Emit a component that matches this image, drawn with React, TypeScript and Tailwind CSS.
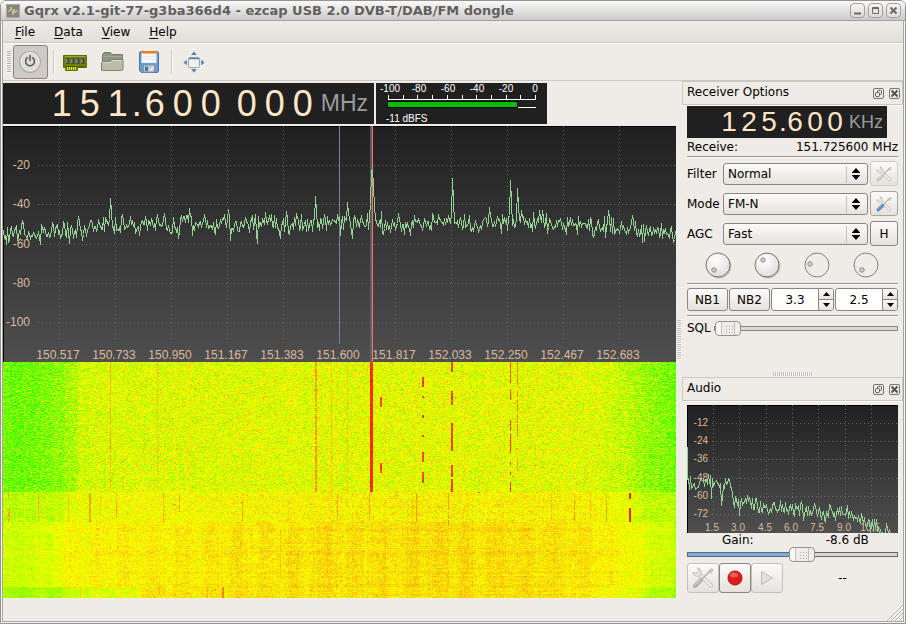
import React, { useLayoutEffect, useRef, useState } from 'react';

const SANS = "font-['DejaVu_Sans',sans-serif]";

function makeRandom(seed: number) {
  let s = seed;
  return () => {
    s = (s + 0x6d2b79f5) | 0;
    let t = Math.imul(s ^ (s >>> 15), 1 | s);
    t = (t + Math.imul(t ^ (t >>> 7), 61 | t)) ^ t;
    return ((t ^ (t >>> 14)) >>> 0) / 4294967296;
  };
}

function interpolate(points: number[][], x: number) {
  if (x <= points[0][0]) return points[0][1];
  for (let i = 1; i < points.length; i++) {
    if (x <= points[i][0]) {
      const [x0, y0] = points[i - 1];
      const [x1, y1] = points[i];
      return y0 + ((y1 - y0) * (x - x0)) / (x1 - x0);
    }
  }
  return points[points.length - 1][1];
}

/* ---------- RF spectrum ---------- */

const FLOOR = [[0, 110], [30, 109], [60, 105], [85, 102], [110, 99], [150, 98], [400, 97], [540, 96], [600, 100], [640, 105], [673, 110]];
const PEAKS = [
  [19, 95], [107, 72], [154, 89], [161, 87], [75, 90], [186, 82], [225, 83], [283, 85], [312, 70], [344, 76],
  [449, 52], [486, 81], [507, 54], [514, 62], [536, 84], [539, 84], [605, 84], [629, 89], [321, 88], [334, 88],
  [88, 94], [142, 90], [178, 90], [395, 87], [435, 88], [518, 84], [242, 91], [266, 90],
];
const DIPS = [[37, 118], [66, 117], [254, 117], [227, 114], [349, 112], [175, 112], [277, 112], [380, 108], [590, 111], [574, 108]];

function spectrumPath() {
  const rnd = makeRandom(77);
  const ys: number[] = [];
  for (let x = 0; x < 673; x++) {
    ys.push(interpolate(FLOOR, x) + (rnd() + rnd() - 1) * 12);
  }
  for (const [x, y] of PEAKS) {
    ys[x] = y;
    ys[x + 1] = Math.min(ys[x + 1], y + (100 - y) * 0.45);
    ys[x - 1] = Math.min(ys[x - 1], y + (100 - y) * 0.75);
  }
  for (const [x, y] of DIPS) ys[x] = y;
  [[366, 90], [367, 78], [368, 44], [369, 43], [370, 60], [371, 80], [372, 92]].forEach(([x, y]) => (ys[x] = y));
  return ys.map((y, x) => `${x ? 'L' : 'M'}${x + 0.5} ${Math.round(y) + 0.5}`).join('');
}

const SPECTRUM = spectrumPath();
const FREQS = ['150.517', '150.733', '150.950', '151.167', '151.383', '151.600', '151.817', '152.033', '152.250', '152.467', '152.683'];
const LEVELS = [['-20', 39], ['-40', 78], ['-60', 118], ['-80', 157], ['-100', 196]] as const;

function Spectrum() {
  return (
    <svg className="block h-[236px] w-full font-['Liberation_Sans',sans-serif] text-[12px]" viewBox="0 0 673 236" preserveAspectRatio="xMidYMid slice" role="img" aria-label="RF spectrum">
      <defs>
        <linearGradient id="plot" x1="0" y1="0" x2="0" y2="1">
          <stop offset="0" stopColor="#202020" />
          <stop offset="1" stopColor="#4f4f4f" />
        </linearGradient>
      </defs>
      <rect width="673" height="236" fill="url(#plot)" />
      <path d="M0 .5H673M.5 0V236" stroke="#000" />
      <g stroke="#666" strokeDasharray="1 3" shapeRendering="crispEdges">
        {FREQS.map((f, i) => i !== 5 && <path key={f} d={`M${56.5 + i * 56} 0V218`} />)}
        {LEVELS.map(([l, y]) => <path key={l} d={`M35 ${y + 0.5}H673`} />)}
      </g>
      <g fill="#d8ba9f">
        {LEVELS.map(([l, y]) => <text key={l} x="27" y={y + 4} textAnchor="end">{l}</text>)}
        {FREQS.map((f, i) => <text key={f} x={55 + i * 56} y="233" textAnchor="middle">{f}</text>)}
      </g>
      <path d="M336.5 0V218" stroke="#788290" />
      <rect x="367" width="3" height="236" fill="#666" fillOpacity=".8" />
      <path d="M369.5 0V236" stroke="#ff7171" />
      <path d={SPECTRUM} fill="none" stroke="#97d097" shapeRendering="crispEdges" />
      <path d="M369.5 71V236" stroke="#ff7171" />
    </svg>
  );
}

/* ---------- Waterfall ---------- */

// x, first row, last row, strength, width
const TRACES = [
  [107, 0, 130, 1.35, 1], [154, 0, 130, 1.25, 1], [186, 0, 130, 1.15, 1], [312, 0, 130, 1.4, 2], [328, 0, 130, 1.25, 1],
  [289, 0, 130, 1.1, 1], [344, 0, 130, 1.25, 1], [367, 0, 130, 1.85, 3], [486, 0, 130, 1.12, 1], [534, 0, 130, 1.12, 1],
  [377, 35, 45, 1.75, 2], [377, 101, 111, 1.75, 2],
  [419, 15, 25, 1.75, 2], [419, 34, 36, 1.75, 2], [419, 53, 56, 1.75, 2], [419, 73, 75, 1.75, 2], [419, 90, 100, 1.75, 2], [419, 110, 121, 1.75, 2],
  [448, 0, 10, 1.75, 2], [448, 29, 43, 1.75, 2], [448, 61, 89, 1.75, 2], [448, 103, 115, 1.75, 2], [448, 117, 130, 1.75, 2],
  [507, 0, 22, 1.65, 1], [507, 28, 38, 1.75, 1], [507, 58, 69, 1.75, 1], [507, 72, 91, 1.75, 1], [507, 100, 103, 1.75, 1], [507, 110, 113, 1.75, 1], [507, 120, 130, 1.8, 1],
  [514, 0, 24, 1.5, 1], [514, 29, 75, 1.5, 1], [514, 86, 88, 1.5, 1], [514, 96, 109, 1.4, 1],
  [394, 130, 131, 1.9, 1], [475, 130, 131, 1.8, 2], [533, 130, 131, 1.6, 1],
  [5, 131, 136, 1.35, 2], [5, 146, 160, 1.35, 2], [35, 131, 160, 1.35, 1], [65, 131, 160, 1.25, 1], [86, 131, 160, 1.4, 2],
  [97, 131, 160, 1.25, 1], [113, 131, 156, 1.3, 1], [160, 131, 160, 1.4, 1], [176, 131, 150, 1.4, 1], [239, 131, 160, 1.35, 1],
  [334, 131, 159, 1.35, 1], [366, 131, 160, 1.35, 1], [409, 131, 160, 1.25, 1], [413, 131, 160, 1.4, 1], [445, 131, 164, 1.4, 1],
  [548, 131, 160, 1.25, 1], [571, 131, 160, 1.4, 1], [587, 131, 157, 1.3, 1], [603, 131, 160, 1.4, 1],
  [626, 131, 137, 1.85, 2], [626, 146, 160, 1.85, 2],
  [198, 165, 218, 0.85, 1], [277, 168, 218, 1.25, 1], [324, 170, 216, 1.25, 1], [435, 162, 220, 1.2, 1],
  [219, 225, 236, 1.5, 2], [156, 225, 232, 1.35, 1], [77, 225, 236, 1.2, 1], [204, 225, 236, 1.3, 1], [457, 225, 236, 1.3, 1], [536, 225, 236, 1.3, 1],
];

function level(x: number, y: number) {
  if (y < 130) return interpolate([[0, 0.44], [25, 0.42], [50, 0.53], [73, 0.68], [78, 0.82], [100, 0.87], [340, 0.9], [560, 0.91], [600, 0.86], [625, 0.72], [645, 0.57], [673, 0.44]], x);
  if (y < 160) return interpolate([[0, 0.72], [50, 0.76], [75, 0.92], [120, 0.98], [260, 1], [330, 1.04], [560, 1.04], [600, 0.99], [625, 0.88], [645, 0.76], [673, 0.7]], x);
  const wave = Math.sin((x / 14) * Math.PI * 0.98) * 0.03;
  if (y < 225) return wave + interpolate([[0, 0.78], [40, 0.84], [60, 0.97], [100, 1.04], [250, 1.09], [330, 1.12], [500, 1.13], [570, 1.1], [610, 1.03], [635, 0.93], [655, 0.82], [673, 0.74]], x);
  return wave + interpolate([[0, 0.62], [50, 0.68], [80, 0.84], [134, 0.9], [136, 1.1], [540, 1.12], [590, 1.05], [625, 0.92], [650, 0.7], [673, 0.62]], x);
}

function Waterfall() {
  const ref = useRef<HTMLCanvasElement>(null);
  useLayoutEffect(() => {
    const ctx = ref.current?.getContext('2d');
    if (!ctx) return;
    const w = 673;
    const h = 236;
    const rnd = makeRandom(366);
    const columns = Array.from({ length: w }, () => (rnd() + rnd() - 1) * 0.07);
    const rows = Array.from({ length: h }, () => (rnd() + rnd() - 1) * 0.06);
    const image = ctx.createImageData(w, h);
    const put = (x: number, y: number, v: number) => {
      const i = (y * w + x) * 4;
      const c = Math.max(0, Math.min(1.95, v));
      image.data[i] = c < 1 ? 255 * c : 255;
      image.data[i + 1] = c < 1 ? 255 : 255 * (2 - c);
      image.data[i + 2] = 0;
      image.data[i + 3] = 255;
    };
    for (let y = 0; y < h; y++) {
      for (let x = 0; x < w; x++) {
        const spread = y < 130 ? 0.36 : y < 160 ? 0.27 : 0.2;
        const n = (rnd() + rnd() + rnd() - 1.5) * spread;
        put(x, y, level(x, y) + columns[x] + rows[y] + n);
      }
    }
    for (const [x, y0, y1, v, width] of TRACES) {
      for (let y = y0; y < y1; y++) {
        for (let k = 0; k < width; k++) {
          if (v < 1.6 && rnd() < 0.15) continue;
          put(x + k, y, v + (rnd() - 0.5) * 0.2);
        }
      }
    }
    ctx.putImageData(image, 0, 0);
  }, []);
  return <canvas ref={ref} width={673} height={236} className="block h-[236px] w-full" role="img" aria-label="Waterfall" />;
}

/* ---------- Audio spectrum ---------- */

const AUDIO_FLOOR = [[1, 79], [10, 80], [16, 79], [23, 77], [32, 82], [40, 78], [43, 82], [46, 92], [52, 102], [58, 97], [66, 99], [74, 106], [88, 102], [98, 105], [110, 104], [120, 106], [132, 104], [142, 108], [162, 108], [168, 112], [175, 115], [185, 120], [195, 126], [206, 128]];
const AUDIO_MARKS = [[18, 74], [24, 93], [34, 100], [35, 92], [38, 73], [42, 74], [60, 90], [98, 97], [108, 98], [127, 98], [138, 117], [52, 110], [116, 115]];

function audioPath() {
  const rnd = makeRandom(12);
  const ys: number[] = [];
  for (let x = 1; x < 206; x++) ys[x] = interpolate(AUDIO_FLOOR, x) + (rnd() + rnd() - 1) * 10;
  for (const [x, y] of AUDIO_MARKS) ys[x] = y;
  let d = 'M.5 42V74';
  for (let x = 1; x < 206; x++) d += `L${x + 0.5} ${Math.min(128, Math.round(ys[x])) + 0.5}`;
  return d;
}

const AUDIO = audioPath();
const AUDIO_X = [['1.5', 26], ['3.0', 52], ['4.5', 79], ['6.0', 105], ['7.5', 131], ['9.0', 158], ['10.5', 184]] as const;
const AUDIO_Y = [['-12', 18], ['-24', 36], ['-36', 54], ['-48', 73], ['-60', 91], ['-72', 109]] as const;

function AudioSpectrum() {
  return (
    <svg className="mt-1 block h-[128px] w-full font-['Liberation_Sans',sans-serif] text-[10px]" viewBox="0 0 211 128" preserveAspectRatio="xMidYMid slice" role="img" aria-label="Audio spectrum">
      <rect width="211" height="128" fill="url(#plot)" />
      <path d="M0 .5H211M.5 0V128" stroke="#000" />
      <g stroke="#6b6b6b" strokeDasharray="1 3" shapeRendering="crispEdges">
        {AUDIO_X.map(([l, x]) => <path key={l} d={`M${x + 0.5} 0V118`} />)}
        {AUDIO_Y.map(([l, y]) => <path key={l} d={`M25 ${y + 0.5}H211`} />)}
      </g>
      <g fill="#d8ba9f">
        {AUDIO_Y.map(([l, y]) => <text key={l} x="21" y={y + 3} textAnchor="end">{l}</text>)}
        {AUDIO_X.map(([l, x]) => <text key={l} x={x - 1} y="126" textAnchor="middle">{l}</text>)}
      </g>
      <path d={AUDIO} fill="none" stroke="#97d097" shapeRendering="crispEdges" />
    </svg>
  );
}

/* ---------- Meter ---------- */

function Meter() {
  return (
    <svg className="h-[41px] w-[171px] bg-[#202020] font-['Liberation_Sans',sans-serif] text-[10px]" viewBox="0 0 171 41" role="img" aria-label="Signal level">
      <g fill="#fff">
        {['-100', '-80', '-60', '-40', '-20', '0'].map((t, i) => <text key={t} x={14 + i * 29} y="9" textAnchor="middle">{t}</text>)}
        <text x="10" y="39">-11 dBFS</text>
      </g>
      <g stroke="#fff" shapeRendering="crispEdges">
        {[0, 15, 29, 44, 59, 74, 88, 103, 118, 132, 147].map((x) => <path key={x} d={`M${12.5 + x} 12V17`} />)}
        <path d="M12 16.5H160M142 24.5H160" />
      </g>
      <rect x="11.5" y="18.5" width="130" height="6" fill="#00bf00" stroke="#000" />
    </svg>
  );
}

/* ---------- Frequency display ---------- */

function BigFrequency() {
  return (
    <div className="flex h-[41px] w-[371px] shrink-0 items-center justify-end bg-[#202020] pr-[6px] font-['Liberation_Sans',sans-serif] text-[36px] leading-[41px] text-[#ffe6c8]">
      {'151.600 000'.split('').map((c, i) => (
        <span key={i} className={c === '.' ? 'w-[9px] text-center' : c === ' ' ? 'w-[8px]' : 'w-[28px] text-center'}>{c}</span>
      ))}
      <span className="ml-1 text-[23px] text-[#9b9b9f]">MHz</span>
    </div>
  );
}

function OffsetFrequency() {
  return (
    <div className="mt-px flex h-[32px] w-[200px] items-center justify-end bg-[#202020] pr-1 font-['Liberation_Sans',sans-serif] text-[28px] leading-[32px] text-[#ffe6c8]">
      {'125.600'.split('').map((c, i) => (
        <span key={i} className={c === '.' ? 'w-[6px] text-center' : 'w-[20px] text-center'}>{c}</span>
      ))}
      <span className="ml-1 text-[18px] text-[#9b9b9f]">KHz</span>
    </div>
  );
}

/* ---------- Icons ---------- */

function ToolsIcon({ size = 18, handle = '#c9c7c4' }: { size?: number; handle?: string }) {
  return (
    <svg width={size} height={size} viewBox="0 0 20 20" fill="none" strokeLinecap="round">
      <path d="M6.500 6.500 17.300 17" stroke="#bfbcb9" strokeWidth="3.600" />
      <path d="M6 6 17.300 17" stroke="#f1efed" strokeWidth="2.200" />
      <path d="M5.500.8A4 4 0 0 1 8 6.500L6.800 8A4 4 0 0 1 .8 4.800L3.500 5.800 5.800 3.800z" fill="#e8e6e4" stroke="#bfbcb9" strokeWidth=".9" strokeLinejoin="round" />
      <path d="M10 10 16 4" stroke="#b8b5b2" strokeWidth="1.500" />
      <path d="m15.200 3.300 3-1.800 1 1-1.900 3z" fill="#cfccc9" stroke="#b8b5b2" strokeWidth=".8" />
      <path d="M2.800 17.200 8.200 11.800" stroke={handle} strokeWidth="4.200" />
      <path d="M2.500 16 7.500 11.300" stroke="#fff" strokeOpacity=".45" />
    </svg>
  );
}

function PowerIcon() {
  return (
    <svg width="24" height="24" viewBox="0 0 24 24">
      <circle cx="12" cy="12" r="10.500" fill="#cccbc9" stroke="#a7a5a2" />
      <circle cx="12" cy="11.500" r="9" fill="#dcdcdb" stroke="#f0f0ef" />
      <path d="M9.500 7.700a4.400 4.400 0 1 0 5 0M12 5.500v5" fill="none" stroke="#555753" strokeWidth="1.500" strokeLinecap="round" />
    </svg>
  );
}

function CardIcon() {
  return (
    <svg width="24" height="24" viewBox="0 0 24 24">
      <path d="M.5 5.500h23v12h-9v3h-12v-3h-2z" fill="#6d8407" stroke="#5b6f08" />
      <path d="M1.500 6.500h21" stroke="#98ab2e" />
      {[3, 8, 13, 18].map((x) => <g key={x}><rect x={x} y="8" width="3.500" height="6" fill="#454748" /><rect x={x} y="9" width="1.500" height="4" fill="#85888a" /></g>)}
      <path d="M2 16.500h20" stroke="#4a5d04" />
      <path d="M4.500 17v3M6.500 17v3M8.500 17v3M10.500 17v3M12.500 17v3" stroke="#e4f000" />
    </svg>
  );
}

function FolderIcon() {
  return (
    <svg width="24" height="24" viewBox="0 0 24 24">
      <path d="M2.500 19V4.500l1.500-2h6.500l1.500 2h10.500v14z" fill="#8f9484" stroke="#787c6d" />
      <path d="M3 6.500h19" stroke="#a6aa9b" />
      <path d="M1.500 20.500v-8l1-1h7.500l2-2h11v10l-1 1z" fill="#b9bda9" stroke="#7f8373" />
      <path d="M2.500 12.500h8l2-2h9.500" fill="none" stroke="#d5d8ca" />
    </svg>
  );
}

function SaveIcon() {
  return (
    <svg width="24" height="24" viewBox="0 0 24 24">
      <path d="M2.500 2.500l1-1h17l1 1v19l-1 1h-16l-2-2z" fill="#6a9bd0" stroke="#4877b0" />
      <rect x="4.500" y="2" width="15" height="11" fill="#f5f7f9" />
      <rect x="4.500" y="1" width="15" height="2.500" fill="#ee7d17" />
      <path d="M6 6.500h12M6 9h12" stroke="#e3e6e8" />
      <rect x="6.500" y="15" width="11" height="7" fill="#c5ccd2" stroke="#8593a3" />
      <rect x="8" y="16.500" width="3" height="4.500" fill="#4775ad" />
      <path d="M13 21l3.500-4" stroke="#eef1f3" strokeWidth="1.500" />
    </svg>
  );
}

function FullscreenIcon() {
  return (
    <svg width="24" height="24" viewBox="0 0 24 24">
      <rect x="6.500" y="7.500" width="11" height="10" rx="1" fill="#f0f0ef" stroke="#a3a19e" />
      <path d="M7 8.500h10" stroke="#5a86bd" strokeWidth="1.500" />
      <path d="m12 1.500 2.800 3.500H9.200zM12 22.500l2.800-3.500H9.200zM1.500 12.500 4.800 9.800v5.400zM22.500 12.500 19.200 9.800v5.400z" fill="#5180ba" />
    </svg>
  );
}

const DOCK_BUTTON = 'flex h-[11px] w-[11px] items-center justify-center rounded-[2px] border border-[#77736f] text-[#55524e]';

function DockTitle({ title }: { title: string }) {
  return (
    <div className="flex h-6 items-center gap-[5px] border border-[#cbc7c1] pr-[2px] pl-1 shadow-[0_1px_0_#fbfaf8]">
      <h2 className="flex-1 pb-[3px] text-[12px] leading-[16px]">{title}</h2>
      <button className={DOCK_BUTTON} aria-label={`Float ${title}`}>
        <svg className="shrink-0" width="9" height="9" viewBox="0 0 9 9" fill="none" stroke="currentColor"><rect x="3.500" y="1.500" width="4" height="4" rx="1" /><rect x="1.500" y="3.500" width="4" height="4" rx="1" fill="#efebe7" /></svg>
      </button>
      <button className={DOCK_BUTTON} aria-label={`Close ${title}`}>
        <svg className="shrink-0" width="9" height="9" viewBox="0 0 9 9" stroke="currentColor" strokeWidth="2"><path d="m1.500 1.500 6 6m0-6-6 6" /></svg>
      </button>
    </div>
  );
}

/* ---------- Form controls ---------- */

const FACE = 'rounded-[3px] border bg-linear-to-b from-[#fcfbfa] to-[#e6e1db]';

function Combo({ label, options }: { label: string; options: string[] }) {
  return (
    <label className="flex flex-1 items-center">
      <span className="w-[36px]">{label}</span>
      <span className="relative flex-1">
        <select className={`block h-[22px] w-full appearance-none pl-1 text-[12px] outline-none border-[#8b8681] ${FACE}`}>
          {options.map((o) => <option key={o}>{o}</option>)}
        </select>
        <svg className="pointer-events-none absolute top-[3px] right-[5px]" width="18" height="17" viewBox="0 0 18 17">
          <path d="M1.500 0v17" stroke="#c5c0ba" />
          <path d="m11 2 4 4.500v.5H7v-.5zM11 14l4-4.500V9H7v.5z" fill="#000" />
        </svg>
      </span>
    </label>
  );
}

function Spin({ label, initial }: { label: string; initial: number }) {
  const [v, setV] = useState(initial);
  const button = 'flex flex-1 items-center justify-center bg-linear-to-b from-[#fcfbfa] to-[#e6e1db]';
  return (
    <div className="flex h-[23px] flex-1 overflow-hidden rounded-[3px] border border-[#8b8681] bg-white">
      <input aria-label={label} className="w-0 flex-1 text-center text-[12px] outline-none" value={v.toFixed(1)} readOnly />
      <div className="flex w-[15px] flex-col divide-y divide-[#8b8681] border-l border-[#8b8681]">
        <button className={button} aria-label={`${label} up`} onClick={() => setV(v + 0.1)}><svg width="7" height="4" viewBox="0 0 7 4"><path d="M3.500 0 7 4H0z" /></svg></button>
        <button className={button} aria-label={`${label} down`} onClick={() => setV(v - 0.1)}><svg width="7" height="4" viewBox="0 0 7 4"><path d="M3.500 4 7 0H0z" /></svg></button>
      </div>
    </div>
  );
}

const DIALS = [
  { name: 'Noise blanker 1 threshold', x: 9, y: 18, on: true },
  { name: 'Noise blanker 2 threshold', x: 9, y: 8, on: true },
  { name: 'Fade', x: 6, y: 12, on: false },
  { name: 'Delay', x: 9, y: 18, on: false },
];

function Dial({ name, x, y, on }: (typeof DIALS)[number]) {
  return (
    <label className="relative block h-[27px] w-[27px]">
      <input type="range" aria-label={name} disabled={!on} className="absolute inset-0 h-full w-full opacity-0" />
      <svg width="27" height="27" viewBox="0 0 27 27">
        <defs><radialGradient id="knob" cx=".4" cy=".3" r=".8"><stop offset="0" stopColor="#fff" /><stop offset="1" stopColor="#dcd9d6" /></radialGradient></defs>
        {on && <circle cx="14" cy="14" r="12.500" fill="#000" fillOpacity=".18" />}
        <circle cx="13" cy="13" r="12" fill={on ? 'url(#knob)' : '#efebe7'} stroke={on ? '#77736f' : '#83807d'} />
        <circle cx={x} cy={y} r="2.200" fill="#d4d2cf" stroke="#8d8a87" />
      </svg>
    </label>
  );
}

const RANGE =
  'block h-[15px] w-full appearance-none bg-transparent outline-none ' +
  '[&::-webkit-slider-runnable-track]:h-[5px] [&::-webkit-slider-runnable-track]:border ' +
  '[&::-webkit-slider-thumb]:mt-[-6px] [&::-webkit-slider-thumb]:h-[15px] [&::-webkit-slider-thumb]:w-[26px] [&::-webkit-slider-thumb]:appearance-none [&::-webkit-slider-thumb]:rounded-[4px] [&::-webkit-slider-thumb]:border [&::-webkit-slider-thumb]:border-[#96928e] ' +
  '[&::-webkit-slider-thumb]:bg-[repeating-linear-gradient(180deg,#eeecea_0_2px,transparent_2px_3px),repeating-linear-gradient(90deg,transparent_0_2px,#b5b1ad_2px_3px),linear-gradient(90deg,#f9f8f7_5px,#c3bfbb_5px,#c3bfbb_6px,#efedeb_6px,#efedeb_18px,#c3bfbb_18px,#c3bfbb_19px,#f0eeec_19px)] ' +
  '[&::-webkit-slider-thumb]:bg-[position:8px_2px,8px_2px,0_0] [&::-webkit-slider-thumb]:bg-[size:9px_9px,9px_9px,auto] [&::-webkit-slider-thumb]:bg-no-repeat ';

function Rule() {
  return <hr className="border-0 border-t border-[#989490] shadow-[0_1px_0_#fff]" />;
}

const TITLE_BUTTON = 'flex h-[15px] w-[15px] items-center justify-center rounded-[4px] border border-[#a3a09d] bg-linear-to-b from-[#f6f5f4] to-[#dddbd9] text-[#6c6a68]';
const TOOL = 'flex h-[34px] w-[35px] items-center justify-center rounded-[3px]';
const FREQ_BUTTON = 'flex h-[25px] w-[28px] items-center justify-center';
const PLAY_BUTTON = 'flex h-[30px] w-[32px] items-center justify-center';

export default function App() {
  const [gain, setGain] = useState(55);
  return (
    <div className={`flex min-h-screen flex-col rounded-t-[6px] border border-[#96928f] bg-[#f8f7f6] text-[12px] leading-[16px] text-black ${SANS}`}>
      <header className="flex h-5 items-center gap-[3px] rounded-t-[5px] border-b border-[#a3a09d] bg-linear-to-b from-[#fafafa] to-[#cccac8] pr-1 pl-[5px]">
        <svg width="14" height="14" viewBox="0 0 14 14"><rect x=".5" y=".5" width="13" height="13" fill="#88857e" stroke="#aaa8a2" /><path d="M2 7h2l1-4 2 8 1-6 1 4 1-2h2" fill="none" stroke="#d2c894" /></svg>
        <h1 className="ml-px flex-1 text-[13px] font-bold text-[#62605e]">Gqrx v2.1-git-77-g3ba366d4 - ezcap USB 2.0 DVB-T/DAB/FM dongle</h1>
        <button className={TITLE_BUTTON} aria-label="Minimize"><svg width="9" height="9" viewBox="0 0 9 9"><path d="M1 7.500h7" stroke="currentColor" strokeWidth="2" /></svg></button>
        <button className={TITLE_BUTTON} aria-label="Maximize"><svg width="9" height="9" viewBox="0 0 9 9" fill="none" stroke="currentColor"><path d="M1.500 1.500h6v6h-6zM1 2.500h7" /></svg></button>
        <button className={TITLE_BUTTON} aria-label="Close"><svg width="9" height="9" viewBox="0 0 9 9" stroke="currentColor" strokeWidth="2"><path d="m1.500 1.500 6 6m0-6-6 6" /></svg></button>
      </header>

      <div className="mx-px mb-px flex flex-1 flex-col border-x border-b border-[#a9a5a2] bg-[#efebe7]">
        <nav className="flex h-[22px] items-center gap-[19px] border-b border-[#cbc7c2] bg-linear-to-b from-[#efebe7] to-[#e2ded8] pt-px pl-3">
          {['File', 'Data', 'View', 'Help'].map((m) => (
            <button key={m}><span className="underline underline-offset-2">{m[0]}</span>{m.slice(1)}</button>
          ))}
        </nav>
        <div className="flex h-[38px] items-center border-t border-b border-t-white border-b-[#cbc7c2] pl-1">
          <div className="h-[22px] w-1 bg-[repeating-linear-gradient(#b3afab_0_1px,#fff_1px_2px)]" />
          <button className="ml-[2px] flex h-[34px] w-[35px] items-center justify-center rounded-[3px] border border-[#8b8681] bg-[#cfcac6] pr-[2px] pb-px" aria-label="Start or stop DSP"><PowerIcon /></button>
          <div className="ml-[5px] h-6 w-[2px] border-r border-l border-r-white border-l-[#cbc7c2]" />
          <div className="ml-[2px] flex gap-[2px]">
            <button className={TOOL} aria-label="Configure device"><CardIcon /></button>
            <button className={TOOL} aria-label="Open"><FolderIcon /></button>
            <button className={TOOL} aria-label="Save"><SaveIcon /></button>
          </div>
          <div className="ml-[5px] h-6 w-[2px] border-r border-l border-r-white border-l-[#cbc7c2]" />
          <button className={`ml-[3px] ${TOOL}`} aria-label="Full screen"><FullscreenIcon /></button>
        </div>

        <main className="flex">
          <section className="min-w-0 flex-1 pt-[2px]">
            <div className="mb-[2px] flex gap-[2px]">
              <BigFrequency />
              <Meter />
            </div>
            <Spectrum />
            <Waterfall />
          </section>

          <div className="flex w-[6px] shrink-0 items-center justify-center">
            <div className="h-[40px] w-1 bg-[repeating-linear-gradient(#bfbbb7_0_1px,#fff_1px_2px)]" />
          </div>

          <aside className="flex w-[221px] shrink-0 flex-col">
            <DockTitle title="Receiver Options" />
            <div className="px-[5px]">
              <OffsetFrequency />
              <div className="flex h-[18px] items-center justify-between whitespace-nowrap"><span>Receive:</span><span>151.725600 MHz</span></div>
              <Rule />
              <div className="mt-1 mb-[6px] flex flex-col gap-[5px]">
                <div className="flex items-center gap-[2px]">
                  <Combo label="Filter" options={['Normal', 'Wide', 'Narrow']} />
                  <button disabled aria-label="Filter settings" className={`border-[#cfcac5] ${FREQ_BUTTON} ${FACE}`}><ToolsIcon size={16} /></button>
                </div>
                <div className="flex items-center gap-[2px]">
                  <Combo label="Mode" options={['FM-N', 'FM-W', 'AM', 'LSB', 'USB']} />
                  <button aria-label="Mode settings" className={`border-[#a9a49f] ${FREQ_BUTTON} ${FACE}`}><ToolsIcon size={16} handle="#5a8ac6" /></button>
                </div>
                <div className="flex items-center gap-[2px]">
                  <Combo label="AGC" options={['Fast', 'Medium', 'Slow', 'Off']} />
                  <button className={`border-[#8b8681] ${FREQ_BUTTON} ${FACE}`}>H</button>
                </div>
              </div>
              <div className="mb-1 flex justify-between px-[18px]">
                {DIALS.map((d) => <Dial key={d.name} {...d} />)}
              </div>
              <Rule />
              <div className="my-[4px] flex gap-px">
                <button className={`h-[23px] w-[41px] border-[#8b8681] ${FACE}`}>NB1</button>
                <button className={`h-[23px] w-[41px] border-[#8b8681] ${FACE}`}>NB2</button>
                <Spin label="Noise blanker 1 level" initial={3.3} />
                <Spin label="Noise blanker 2 level" initial={2.5} />
              </div>
              <Rule />
              <label className="mt-1 flex items-center gap-[3px]">
                <span>SQL</span>
                <input type="range" defaultValue={0} className={`[&::-webkit-slider-runnable-track]:border-[#8d8781] [&::-webkit-slider-runnable-track]:bg-[#ddd6cf] ${RANGE}`} />
              </label>
            </div>

            <div className="mx-auto mt-[36px] mb-px h-1 w-[40px] bg-[repeating-linear-gradient(90deg,#bfbbb7_0_1px,#fff_1px_2px)]" />

            <DockTitle title="Audio" />
            <div className="px-[5px]">
              <AudioSpectrum />
              <div className="grid grid-cols-2 text-center leading-[14px]"><label htmlFor="gain" className="pr-1">Gain:</label><output htmlFor="gain" className="pl-1">-8.6 dB</output></div>
              <input
                id="gain"
                type="range"
                value={gain}
                onChange={(e) => setGain(Number(e.target.value))}
                style={{ '--fill': `${gain}%` } as React.CSSProperties}
                className={`[&::-webkit-slider-runnable-track]:border-[#5f6a78] [&::-webkit-slider-runnable-track]:bg-[linear-gradient(90deg,#7fadde_var(--fill),#ddd6cf_var(--fill))] ${RANGE}`}
              />
              <div className="mt-px flex items-center">
                <button disabled aria-label="Audio settings" className={`border-[#c5c0ba] ${PLAY_BUTTON} ${FACE}`}><ToolsIcon size={22} handle="#b5b2af" /></button>
                <button aria-label="Record" className={`border-[#8b8681] ${PLAY_BUTTON} ${FACE}`}><svg width="16" height="16" viewBox="0 0 16 16"><circle cx="8" cy="8" r="7" fill="#e01b1b" stroke="#b80f0f" /><ellipse cx="7" cy="5" rx="4" ry="2.500" fill="#fff" fillOpacity=".3" /></svg></button>
                <button disabled aria-label="Play" className={`border-[#c5c0ba] ${PLAY_BUTTON} ${FACE}`}><svg width="14" height="16" viewBox="0 0 14 16"><path d="M1.500 1.500 12.500 8l-11 6.500z" fill="#e2e0de" stroke="#bfbcb9" /></svg></button>
                <span className="flex-1 pl-1 text-center">--</span>
              </div>
            </div>
          </aside>
        </main>

        <footer className="flex flex-1 items-end justify-end">
          <svg width="17" height="17" viewBox="0 0 17 17" stroke="#b3afab"><path d="M1 17 17 1M5 17 17 5M9 17 17 9M13 17l4-4" /><path d="M2 17 17 2M6 17 17 6M10 17l7-7M14 17l3-3" stroke="#fff" /></svg>
        </footer>
      </div>
    </div>
  );
}
